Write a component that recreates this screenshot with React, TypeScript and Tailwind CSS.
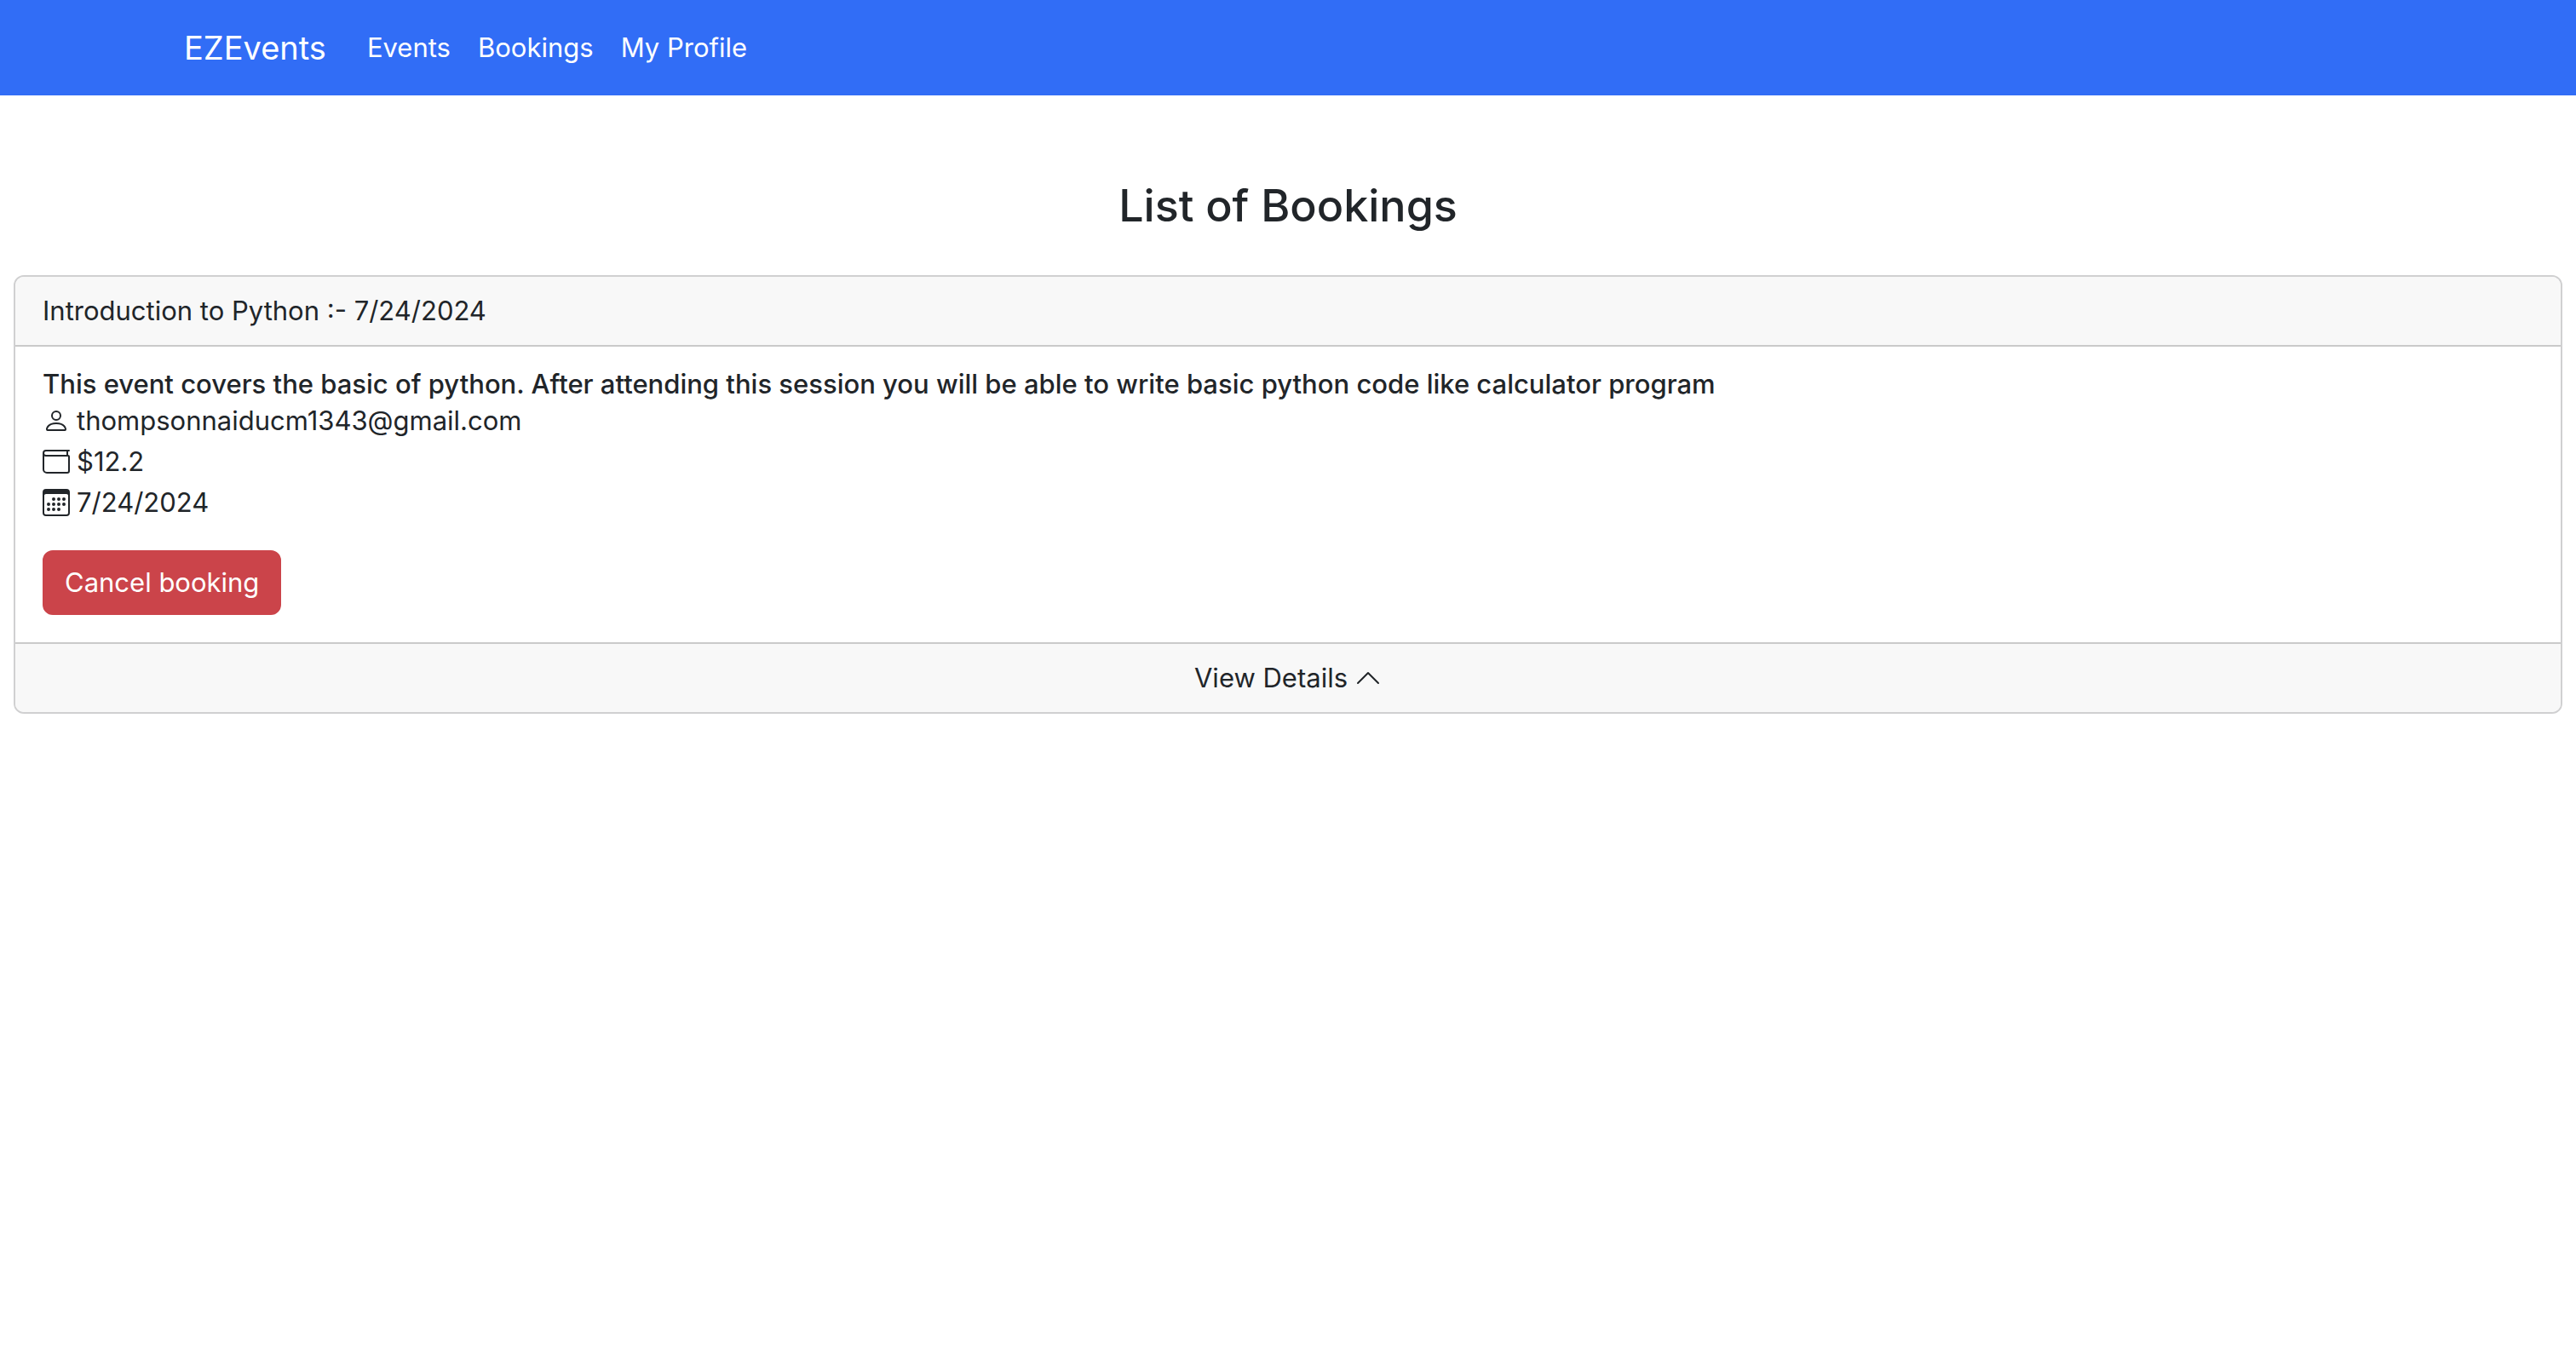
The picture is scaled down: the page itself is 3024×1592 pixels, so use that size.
import { BsPerson, BsWallet, BsCalendar3, BsChevronUp } from "react-icons/bs";

const links = ["Events", "Bookings", "My Profile"];

export default function App() {
  return (
    <div className="min-h-screen bg-white font-['Inter',sans-serif] text-[31px] leading-[48px] text-[#212529]">
      <nav className="flex h-28 items-center bg-[#316df6] px-[216px] text-white">
        <a href="#" className="mr-12 text-[38px] leading-[60px]">EZEvents</a>
        <div className="flex gap-8">
          {links.map((l) => <a key={l} href="#">{l}</a>)}
        </div>
      </nav>
      <main className="px-4 pt-24">
        <h1 className="mb-12 text-center text-[52px] font-medium leading-[67px]">List of Bookings</h1>
        <section className="overflow-hidden rounded-xl border-2 border-[#d0d0d1]">
          <header className="border-b-2 border-[#cacaca] bg-[#f8f8f8] px-8 py-4">Introduction to Python :- 7/24/2024</header>
          <div className="px-8 pt-6 pb-8">
            <h2 className="font-medium leading-[39px]">This event covers the basic of python. After attending this session you will be able to write basic python code like calculator program</h2>
            <div className="flex items-center gap-2"><BsPerson className="size-8" /><span>thompsonnaiducm1343@gmail.com</span></div>
            <div className="flex items-center gap-2"><BsWallet className="size-8" /><span>$12.2</span></div>
            <div className="flex items-center gap-2"><BsCalendar3 className="size-8" /><span>7/24/2024</span></div>
            <button type="button" className="mt-8 block rounded-xl border-2 border-[#cb444a] bg-[#cb444a] px-6 py-3 text-white">Cancel booking</button>
          </div>
          <footer className="border-t-2 border-[#cacaca] bg-[#f8f8f8]">
            <button type="button" className="mx-auto flex items-center gap-2 py-4">View Details <BsChevronUp className="size-8" /></button>
          </footer>
        </section>
      </main>
    </div>
  );
}
